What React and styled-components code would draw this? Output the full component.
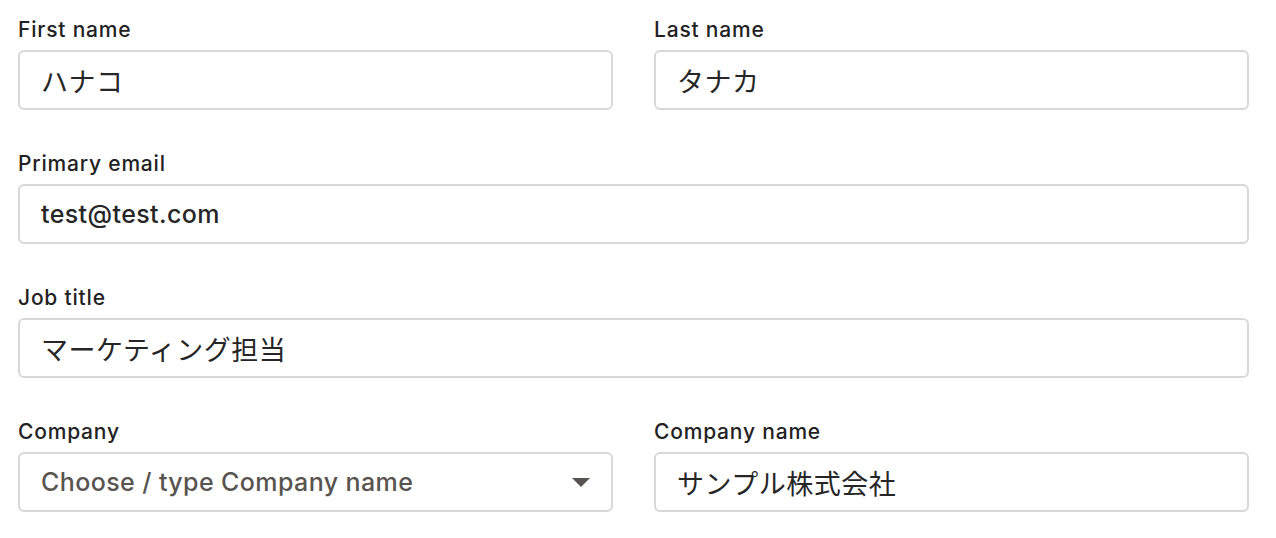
import styled, { createGlobalStyle } from "styled-components";

const GlobalStyle = createGlobalStyle`
  html, body {
    margin: 0;
    padding: 0;
    background: #ffffff;
  }
  body {
    font-family: Inter, "Noto Sans CJK JP", sans-serif;
    color: #262626;
  }
`;

const Form = styled.form`
  width: 1231px;
  padding: 16px 0 0 18px;
  display: flex;
  flex-direction: column;
  gap: 40px;
`;

const Row = styled.div`
  display: grid;
  grid-template-columns: ${({ $cols }) => ($cols === 2 ? "1fr 1fr" : "1fr")};
  column-gap: 41px;
`;

const Field = styled.div`
  display: flex;
  flex-direction: column;
  gap: 6px;
`;

const Label = styled.label`
  font-size: 21px;
  line-height: 28px;
  font-weight: 500;
  color: #222222;
  letter-spacing: 0.8px;
`;

const Box = styled.div`
  position: relative;
  height: 60px;
  box-sizing: border-box;
  border: 2px solid #d8d8d8;
  border-radius: 6px;
  display: flex;
  align-items: center;
  padding: 0 20px 0 21px;
  background: #fff;
`;

const Value = styled.span`
  flex: 1;
  font-family: Inter, "Noto Sans CJK JP", sans-serif;
  font-size: ${({ $latin }) => ($latin ? "25px" : "27px")};
  font-weight: ${({ $latin }) => ($latin ? 500 : 400)};
  letter-spacing: ${({ $latin }) => ($latin ? "0.4px" : "0.5px")};
  color: ${({ $muted }) => ($muted ? "#58544f" : "#262626")};
`;

const Caret = styled.span`
  width: 0;
  height: 0;
  border-left: 9px solid transparent;
  border-right: 9px solid transparent;
  border-top: 9px solid #58544f;
  margin-right: 1px;
`;

function TextField({ label, value, latin, muted, select }) {
  return (
    <Field>
      <Label>{label}</Label>
      <Box>
        <Value $latin={latin} $muted={muted}>{value}</Value>
        {select && <Caret />}
      </Box>
    </Field>
  );
}

export default function App() {
  return (
    <>
      <GlobalStyle />
      <Form>
        <Row $cols={2}>
          <TextField label="First name" value="ハナコ" />
          <TextField label="Last name" value="タナカ" />
        </Row>
        <Row>
          <TextField label="Primary email" value="test@test.com" latin />
        </Row>
        <Row>
          <TextField label="Job title" value="マーケティング担当" />
        </Row>
        <Row $cols={2}>
          <TextField
            label="Company"
            value="Choose / type Company name"
            latin
            muted
            select
          />
          <TextField label="Company name" value="サンプル株式会社" />
        </Row>
      </Form>
    </>
  );
}
